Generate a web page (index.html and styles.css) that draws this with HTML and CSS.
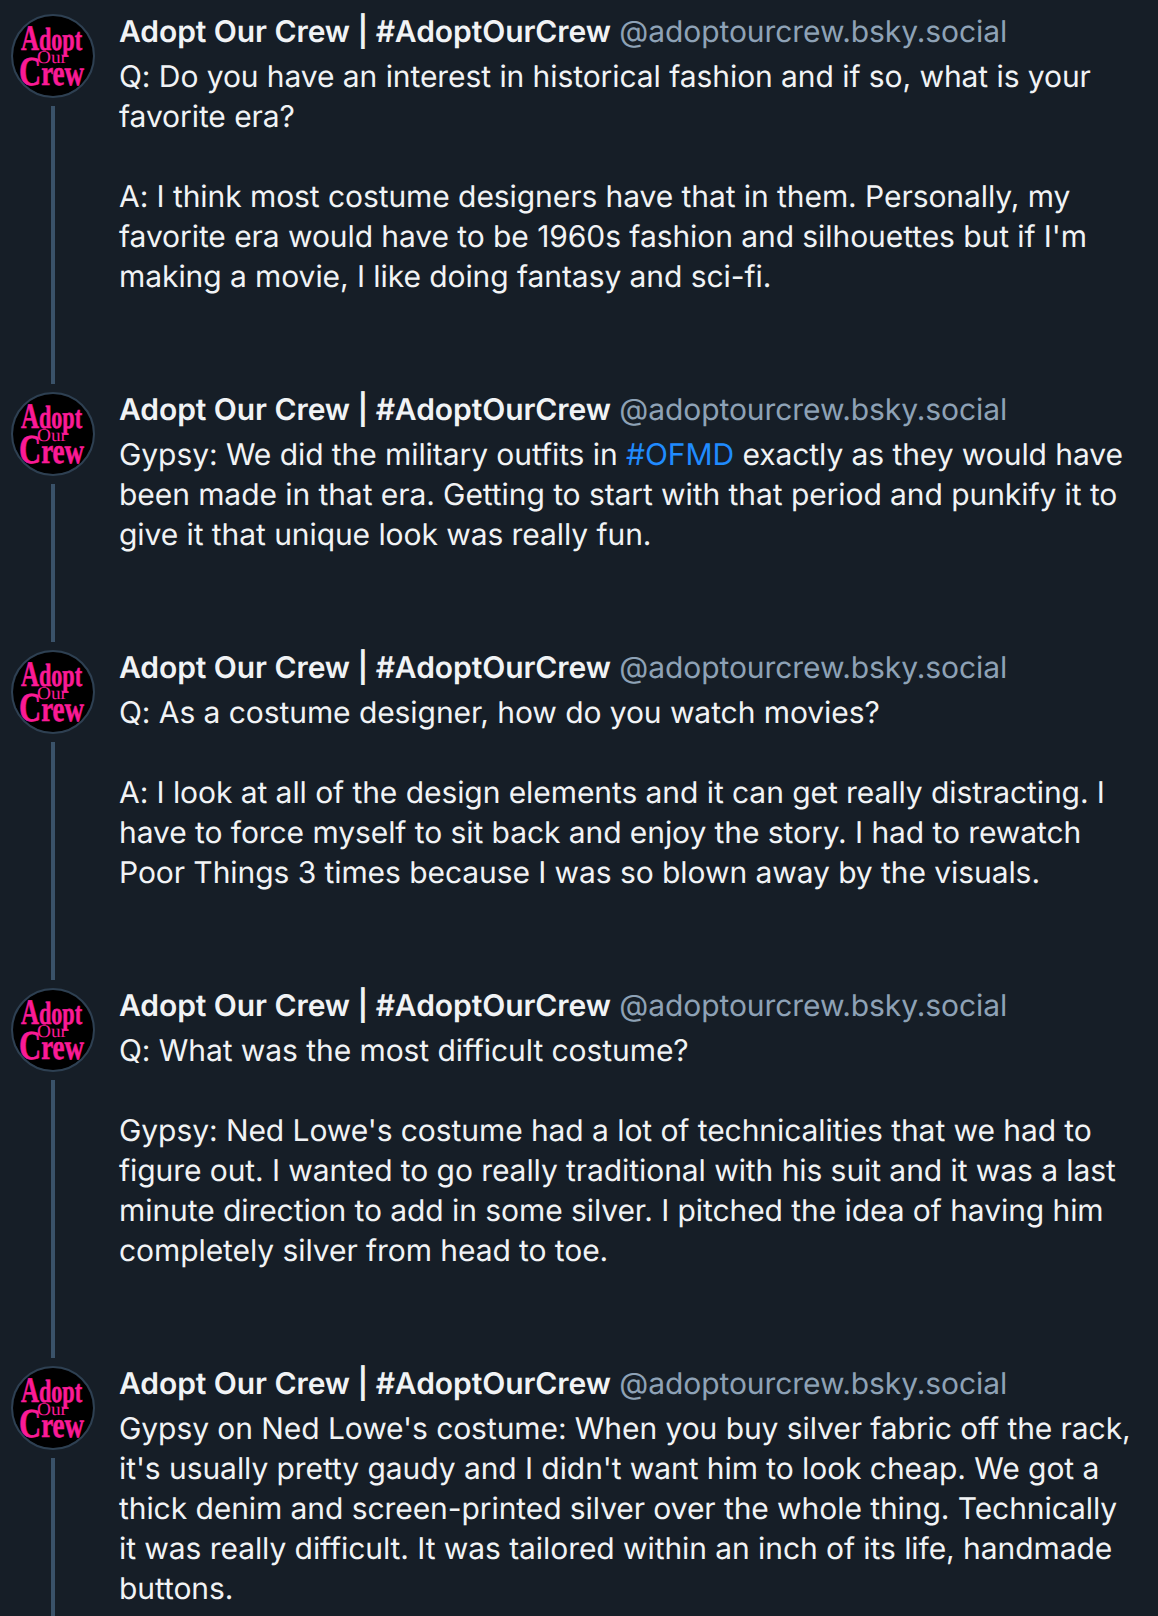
FILE: index.html
```html
<!DOCTYPE html>
<html lang="en">
<head>
<meta charset="utf-8">
<title>Adopt Our Crew thread</title>
<link rel="stylesheet" href="styles.css">
</head>
<body>
<svg class="defs" width="0" height="0" aria-hidden="true">
  <symbol id="logo" viewBox="0 0 80 80">
    <circle cx="40" cy="40" r="40" fill="#000"/>
    <text class="logo-a" x="8" y="34" textLength="61" lengthAdjust="spacingAndGlyphs"><tspan class="logo-cap">A</tspan>dopt</text>
    <text class="logo-o" x="24" y="47" textLength="30" lengthAdjust="spacingAndGlyphs">Our</text>
    <text class="logo-c" x="6" y="69" textLength="65" lengthAdjust="spacingAndGlyphs"><tspan class="logo-big">C</tspan>rew</text>
  </symbol>
</svg>
<main class="thread">
  <article class="post">
    <div class="rail"><svg class="avatar"><use href="#logo"/></svg><div class="line"></div></div>
    <div class="content">
      <div class="head"><span class="name">Adopt Our Crew | #AdoptOurCrew</span> <span class="handle">@adoptourcrew.bsky.social</span></div>
      <p class="body">Q: Do you have an interest in historical fashion and if so, what is your favorite era?<br><br>A: I think most costume designers have that in them. Personally, my favorite era would have to be 1960s fashion and silhouettes but if I'm making a movie, I like doing fantasy and sci-fi.</p>
    </div>
  </article>
  <article class="post">
    <div class="rail"><svg class="avatar"><use href="#logo"/></svg><div class="line"></div></div>
    <div class="content">
      <div class="head"><span class="name">Adopt Our Crew | #AdoptOurCrew</span> <span class="handle">@adoptourcrew.bsky.social</span></div>
      <p class="body">Gypsy: We did the military outfits in <a class="tag" href="#">#OFMD</a> exactly as they would have been made in that era. Getting to start with that period and punkify it to give it that unique look was really fun.</p>
    </div>
  </article>
  <article class="post">
    <div class="rail"><svg class="avatar"><use href="#logo"/></svg><div class="line"></div></div>
    <div class="content">
      <div class="head"><span class="name">Adopt Our Crew | #AdoptOurCrew</span> <span class="handle">@adoptourcrew.bsky.social</span></div>
      <p class="body">Q: As a costume designer, how do you watch movies?<br><br>A: I look at all of the design elements and it can get really distracting. I have to force myself to sit back and enjoy the story. I had to rewatch Poor Things 3 times because I was so blown away by the visuals.</p>
    </div>
  </article>
  <article class="post">
    <div class="rail"><svg class="avatar"><use href="#logo"/></svg><div class="line"></div></div>
    <div class="content">
      <div class="head"><span class="name">Adopt Our Crew | #AdoptOurCrew</span> <span class="handle">@adoptourcrew.bsky.social</span></div>
      <p class="body">Q: What was the most difficult costume?<br><br>Gypsy: Ned Lowe's costume had a lot of technicalities that we had to figure out. I wanted to go really traditional with his suit and it was a last minute direction to add in some silver. I pitched the idea of having him completely silver from head to toe.</p>
    </div>
  </article>
  <article class="post">
    <div class="rail"><svg class="avatar"><use href="#logo"/></svg><div class="line"></div></div>
    <div class="content">
      <div class="head"><span class="name">Adopt Our Crew | #AdoptOurCrew</span> <span class="handle">@adoptourcrew.bsky.social</span></div>
      <p class="body">Gypsy on Ned Lowe's costume: When you buy silver fabric off the rack, it's usually pretty gaudy and I didn't want him to look cheap. We got a thick denim and screen-printed silver over the whole thing. Technically it was really difficult. It was tailored within an inch of its life, handmade buttons.</p>
    </div>
  </article>
</main>
</body>
</html>
```
FILE: styles.css
```css
html, body {
  margin: 0;
  height: 1616px;
  overflow: hidden;
  background: #161e27;
}
body {
  font-family: Inter, "Liberation Sans", sans-serif;
  color: #f1f3f5;
  text-rendering: geometricPrecision;
  letter-spacing: -0.07px;
}
.defs { position: absolute; }
.thread {
  display: flex;
  flex-direction: column;
  box-sizing: border-box;
  height: 1616px;
  overflow: hidden;
  padding: 14px 0 0 11px;
}
.post {
  display: flex;
  flex: none;
  gap: 24px;
  padding-bottom: 8px;
}
.rail {
  width: 84px;
  flex: none;
  display: flex;
  flex-direction: column;
  align-items: center;
}
.avatar {
  width: 84px;
  height: 84px;
  flex: none;
  box-sizing: border-box;
  border: 2px solid #2e4052;
  border-radius: 50%;
  display: block;
}
.line {
  flex: 1;
  width: 4px;
  margin-top: 8px;
  background: #3a5269;
}
.content {
  flex: 1;
  min-width: 0;
  padding-right: 16px;
  padding-bottom: 87px;
}
.head {
  font-size: 30px;
  line-height: 36px;
  white-space: nowrap;
}
.name { font-weight: 600; color: #f1f3f5; }
.handle { color: #8ea2b6; }
.body {
  margin: 7px 0 0;
  font-size: 30px;
  line-height: 40px;
  color: #f1f3f5;
}
.tag { color: #208bfe; text-decoration: none; }
.logo-a, .logo-c, .logo-o {
  font-family: "Liberation Serif", serif;
  fill: #fa1a96;
  letter-spacing: 0;
}
.logo-a, .logo-c { stroke: #fa1a96; stroke-width: 0.6px; }
.logo-a { font-size: 32px; font-weight: 700; }
.logo-cap { font-size: 36px; }
.logo-o { font-size: 18px; }
.logo-c { font-size: 36px; font-weight: 700; }
.logo-big { font-size: 41px; }
```
